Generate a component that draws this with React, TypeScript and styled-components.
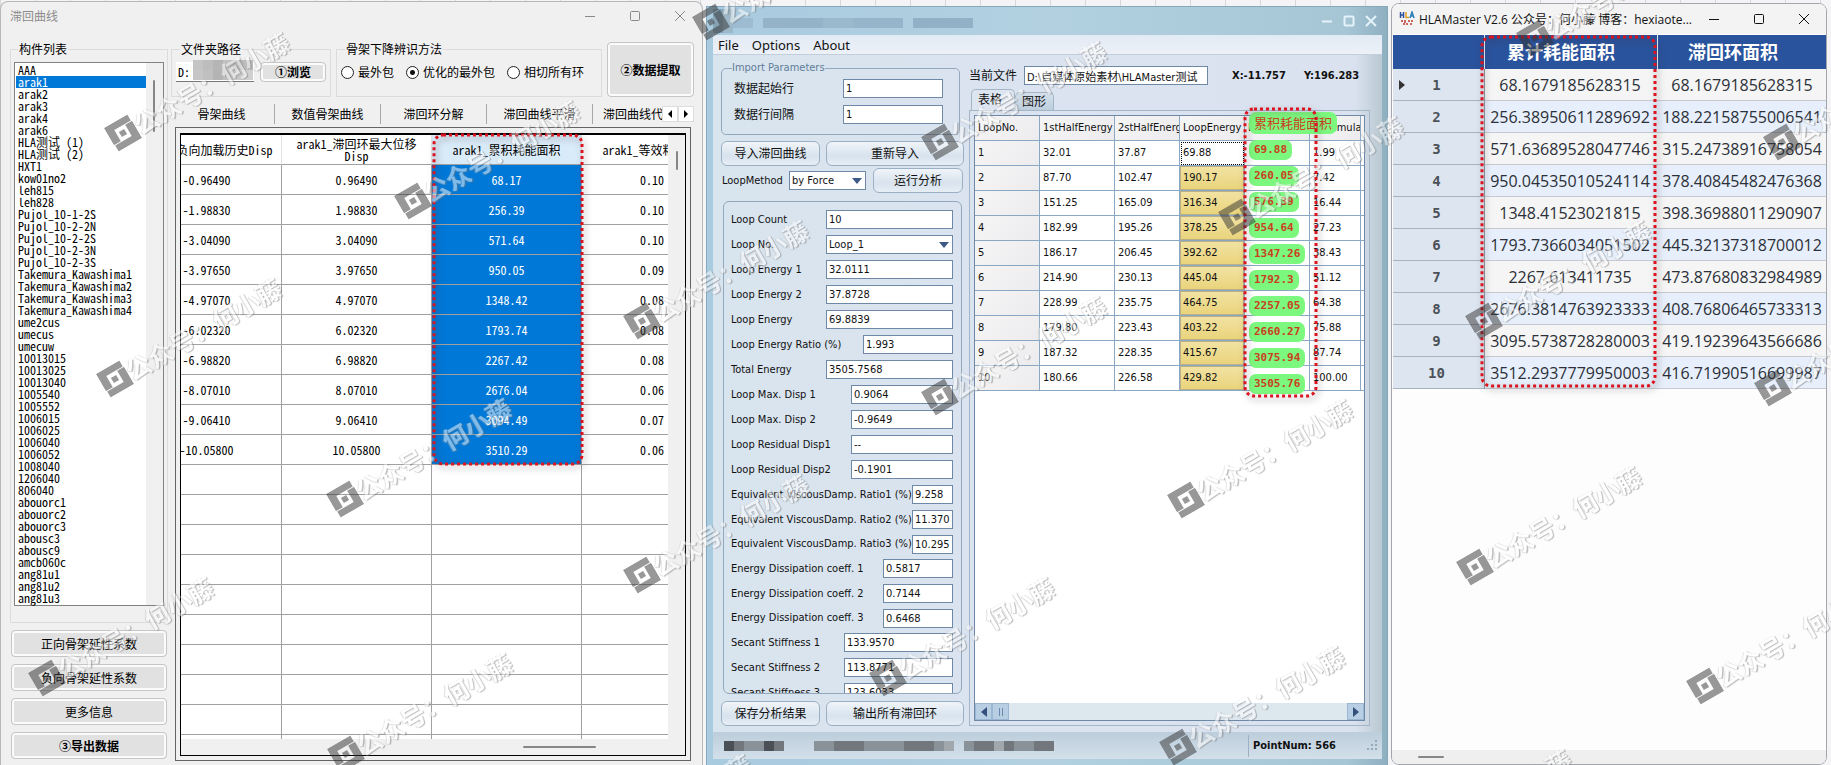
import React from 'react';
import styled, { createGlobalStyle, css } from 'styled-components';

const song = `"Noto Sans CJK SC", sans-serif`;
const tahoma = `"DejaVu Sans Condensed", "Noto Sans CJK SC", sans-serif`;
const segoe = `"Open Sans", "Noto Sans CJK SC", sans-serif`;

const GlobalStyle = createGlobalStyle`
  *, *::before, *::after { box-sizing: border-box; }
  body { margin: 0; background: #e4e4e8; }
  button, input, select { font: inherit; color: inherit; margin: 0; }
`;

const Desktop = styled.main`
  position: relative;
  display: grid;
  grid-template-columns: minmax(0, 703fr) minmax(0, 682fr) minmax(0, 436fr);
  grid-template-rows: minmax(0, 1fr);
  column-gap: 3px;
  padding-right: 4px;
  height: 100vh;
  min-height: 765px;
  overflow: hidden;
  background: repeating-linear-gradient(90deg, #d8d8dc 0 1px, #f4f4f6 1px 35px);
`;

const CaptionIcons = styled.div`
  display: flex;
  margin-left: auto;
`;
const CaptionButton = styled.button<{ $w: number; $color: string }>`
  display: grid;
  place-items: center;
  width: ${p => p.$w}px;
  height: 28px;
  padding: 0;
  border: 0;
  background: none;
  color: ${p => p.$color};
`;

function Caption({ w, color, heavy }: { w: number; color: string; heavy?: boolean }) {
  const sw = heavy ? 2 : 1;
  return (
    <CaptionIcons>
      <CaptionButton $w={w} $color={color} aria-label="Minimize">
        <svg width="12" height="12" fill="none" stroke="currentColor" strokeWidth={sw}><path d="M1 6.5h10" /></svg>
      </CaptionButton>
      <CaptionButton $w={w} $color={color} aria-label="Maximize">
        <svg width="12" height="12" fill="none" stroke="currentColor" strokeWidth={sw}><rect x="1.5" y="1.5" width="9" height="9" rx="1" /></svg>
      </CaptionButton>
      <CaptionButton $w={w} $color={color} aria-label="Close">
        <svg width="12" height="12" fill="none" stroke="currentColor" strokeWidth={sw}><path d="M1 1l10 10M11 1L1 11" /></svg>
      </CaptionButton>
    </CaptionIcons>
  );
}

/* Dotted red marker laid over a table column */
const Marker = styled.div<{ $x: number; $y: number; $w: number; $h: number }>`
  position: absolute;
  left: ${p => p.$x}px;
  top: ${p => p.$y}px;
  width: ${p => p.$w}px;
  height: ${p => p.$h}px;
  pointer-events: none;
  filter: drop-shadow(2px 3px 3px rgba(60, 40, 40, 0.5));
  svg { display: block; width: 100%; height: 100%; overflow: visible; }
`;
function DottedMarker(p: { x: number; y: number; w: number; h: number }) {
  return (
    <Marker $x={p.x} $y={p.y} $w={p.w} $h={p.h}>
      <svg>
        <rect width={p.w} height={p.h} rx="9" fill="none" stroke="#dc1420" strokeWidth="3" strokeDasharray="3 3" />
      </svg>
    </Marker>
  );
}

/* ---------- hysteresis window ---------- */

const HystWindow = styled.section`
  display: flex;
  flex-direction: column;
  margin-top: 1px;
  border: 1px solid #b8b8b8;
  border-bottom: 0;
  border-radius: 8px 8px 0 0;
  background: #f0f0f0;
  font: 12px/12px ${song};
  font-feature-settings: "hwid";
  color: #000;
  overflow: hidden;
`;
const HystTitle = styled.header`
  display: flex;
  align-items: center;
  height: 28px;
  padding: 0 0 0 9px;
  color: #8c8c8c;
`;
const HystBody = styled.div`
  flex: 1;
  min-height: 0;
  display: grid;
  grid-template-columns: 158px minmax(0, 1fr);
  grid-template-rows: minmax(0, 1fr);
  column-gap: 3px;
  padding: 12px 8px 4px 9px;
`;
const Side = styled.div`
  display: flex;
  flex-direction: column;
  gap: 7px;
  > button { margin: 0 1px; }
`;
const Group = styled.fieldset<{ $grow?: boolean }>`
  min-width: 0;
  margin: 0;
  padding: 6px 4px 8px;
  border: 1px solid #dcdcdc;
  legend { margin-left: 4px; padding: 0 1px; line-height: 14px; }
  ${p => p.$grow && css`height: 581px; padding: 6px 3px 15px;`}
`;
const ListBox = styled.ul`
  position: relative;
  display: grid;
  grid-template-columns: minmax(0, 1fr) 16px;
  grid-auto-rows: 12px;
  margin: 0;
  padding: 1px;
  list-style: none;
  border: 1px solid #828282;
  background: linear-gradient(#f0f0f0, #f0f0f0) right / 17px 100% no-repeat #fff;
  li { grid-column: 1; padding-left: 2px; white-space: pre; }
  li[aria-selected='true'] { background: #0078d7; color: #fff; }
`;
const Thumb = styled.span<{ $w: number; $h: number }>`
  display: block;
  width: ${p => p.$w}px;
  height: ${p => p.$h}px;
  background: #868686;
  border-radius: 1px;
`;
const ListThumb = styled(Thumb)`
  position: absolute;
  right: 8px;
  top: 17px;
`;
const ClassicButton = styled.button<{ $h: number; $w?: number; $bold?: boolean }>`
  height: ${p => p.$h}px;
  width: ${p => (p.$w ? `${p.$w}px` : 'auto')};
  padding: 0;
  border: 1px solid #c6c6c6;
  border-radius: 4px;
  box-shadow: inset 0 0 0 2px #fbfbfb;
  background: #e1e1e1;
  font-weight: ${p => (p.$bold ? 700 : 400)};
  white-space: nowrap;
`;
const HystMain = styled.div`
  display: flex;
  flex-direction: column;
  min-width: 0;
  min-height: 0;
`;
const Options = styled.div`
  display: grid;
  grid-template-columns: 160px minmax(0, 1fr) 87px;
  column-gap: 5px;
  align-items: start;
`;
const OptionGroup = styled(Group)`
  height: 55px;
`;
const PathRow = styled.div`
  display: flex;
  align-items: center;
  gap: 6px;
`;
const PathField = styled.div`
  position: relative;
  width: 78px;
  height: 20px;
  input {
    width: 100%;
    height: 20px;
    padding: 0 2px;
    border: 0;
    border-bottom: 1px solid #777;
    background: #fff;
  }
`;
const PathMosaic = styled.svg`
  display: block;
  position: absolute;
  right: 1px;
  top: -2px;
`;
const RadioRow = styled.div`
  display: flex;
  align-items: center;
  gap: 12px;
  height: 20px;
  label { display: flex; align-items: center; gap: 4px; white-space: nowrap; }
  input {
    appearance: none;
    width: 13px;
    height: 13px;
    border: 1px solid #222;
    border-radius: 50%;
    background: #fff;
  }
  input:checked { background: radial-gradient(circle, #111 0 2px, #fff 3px); }
`;
const TabStrip = styled.div`
  display: flex;
  align-items: center;
  height: 24px;
  margin: 5px 0 1px -2px;
`;
const StripTab = styled.button`
  flex: none;
  width: 106px;
  height: 20px;
  padding: 0;
  border: 0;
  border-right: 1px solid #a8a8a8;
  background: none;
  white-space: nowrap;
`;
const LastTab = styled(StripTab)`
  flex: 1;
  min-width: 0;
  padding-left: 10px;
  border: 0;
  overflow: hidden;
  text-align: left;
`;
const TabArrow = styled.button`
  display: grid;
  place-items: center;
  width: 16px;
  height: 16px;
  padding: 0;
  border: 1px solid #ddd;
  background: #fff;
`;
const Frame = styled.div`
  flex: 1;
  min-height: 0;
  display: flex;
  margin: 0 3px 0 4px;
  padding: 5px 4px 4px;
  border: 1px solid #646464;
`;
const Inner = styled.div`
  position: relative;
  flex: 1;
  min-width: 0;
  display: grid;
  grid-template-columns: minmax(0, 1fr) 17px;
  grid-template-rows: minmax(0, 1fr) 16px;
  border: 1px solid #000;
  border-top-width: 2px;
`;
const Viewport = styled.div`
  overflow: hidden;
  background: #fff;
`;
const LoadTable = styled.table`
  width: 600px;
  margin-left: -49px;
  table-layout: fixed;
  border-collapse: separate;
  border-spacing: 0;
  th, td {
    height: 30px;
    padding: 0;
    border-right: 1px solid #a0a0a0;
    border-bottom: 1px solid #a0a0a0;
    font-weight: 400;
    text-align: center;
  }
  th { border-right-color: #e2e2e2; overflow: hidden; }
  td:nth-child(4) { padding-left: 58px; text-align: left; }
`;
const Picked = styled.td`
  background: #0078d7;
  color: #fff;
`;
const PickedHead = styled.th`
  background: #d9ebf9;
`;
const RightTrack = styled.div`
  padding: 16px 0 0 8px;
  background: #f0f0f0;
`;
const BottomTrack = styled.div`
  grid-column: 1 / -1;
  display: flex;
  align-items: center;
  justify-content: flex-end;
  padding-right: 89px;
  background: #f0f0f0;
`;

const members = ['AAA', 'arak1', 'arak2', 'arak3', 'arak4', 'arak6', 'HLA测试 (1)', 'HLA测试 (2)', 'HXT1', 'kow01no2', 'leh815', 'leh828',
  'Pujol_10-1-2S', 'Pujol_10-2-2N', 'Pujol_10-2-2S', 'Pujol_10-2-3N', 'Pujol_10-2-3S',
  'Takemura_Kawashima1', 'Takemura_Kawashima2', 'Takemura_Kawashima3', 'Takemura_Kawashima4',
  'ume2cus', 'umecus', 'umecuw', '10013015', '10013025', '10013040', '1005540', '1005552', '1006015', '1006025', '1006040', '1006052',
  '1008040', '1206040', '806040', 'abouorc1', 'abouorc2', 'abouorc3', 'abousc3', 'abousc9', 'amcb060c', 'ang81u1', 'ang81u2', 'ang81u3'];

const loads: [string, string, string][] = [
  ['0.96490', '68.17', '0.10'], ['1.98830', '256.39', '0.10'], ['3.04090', '571.64', '0.10'], ['3.97650', '950.05', '0.09'],
  ['4.97070', '1348.42', '0.08'], ['6.02320', '1793.74', '0.08'], ['6.98820', '2267.42', '0.08'], ['8.07010', '2676.04', '0.06'],
  ['9.06410', '3094.49', '0.07'], ['10.05800', '3510.29', '0.06'],
];

function Pixels({ cells, size, cols = cells.length }: { cells: string[]; size: number; cols?: number }) {
  return (
    <svg width={cols * size} height={Math.ceil(cells.length / cols) * size} aria-hidden="true" shapeRendering="crispEdges">
      {cells.map((c, i) => <rect key={i} x={(i % cols) * size} y={Math.floor(i / cols) * size} width={size} height={size} fill={c} />)}
    </svg>
  );
}

const pathCells = ['#c4c4c4', '#bdbdbd', '#b5b5b5', '#c0c0c0', '#b4b4b4', '#bcbcbc', '#c6c6c6', '#c0c0c0', '#b4b4b4', '#bebebe', '#c8c8c8', '#d0d0d0'];

function Hysteresis() {
  return (
    <HystWindow>
      <HystTitle>滞回曲线<Caption w={45} color="#8a8a8a" /></HystTitle>
      <HystBody>
        <Side>
          <Group $grow>
            <legend>构件列表</legend>
            <ListBox role="listbox" aria-label="构件列表">
              {members.map(m => <li key={m} role="option" aria-selected={m === 'arak1'}>{m}</li>)}
              <ListThumb $w={2} $h={52} />
            </ListBox>
          </Group>
          <ClassicButton $h={27}>正向骨架延性系数</ClassicButton>
          <ClassicButton $h={27}>负向骨架延性系数</ClassicButton>
          <ClassicButton $h={27}>更多信息</ClassicButton>
          <ClassicButton $h={27} $bold>③导出数据</ClassicButton>
        </Side>
        <HystMain>
          <Options>
            <OptionGroup>
              <legend>文件夹路径</legend>
              <PathRow>
                <PathField>
                  <input aria-label="文件夹路径" defaultValue="D:" />
                  <PathMosaic as="span"><Pixels cells={pathCells} size={10} cols={6} /></PathMosaic>
                </PathField>
                <ClassicButton $h={20} $w={66} $bold>①浏览</ClassicButton>
              </PathRow>
            </OptionGroup>
            <OptionGroup>
              <legend>骨架下降辨识方法</legend>
              <RadioRow>
                <label><input type="radio" name="method" />最外包</label>
                <label><input type="radio" name="method" defaultChecked />优化的最外包</label>
                <label><input type="radio" name="method" />相切所有环</label>
              </RadioRow>
            </OptionGroup>
            <ClassicButton $h={55} $bold>②数据提取</ClassicButton>
          </Options>
          <TabStrip>
            <StripTab>骨架曲线</StripTab>
            <StripTab>数值骨架曲线</StripTab>
            <StripTab>滞回环分解</StripTab>
            <StripTab>滞回曲线平滑</StripTab>
            <LastTab>滞回曲线代</LastTab>
            <TabArrow aria-label="Previous tabs"><svg width="8" height="8"><path d="M6 0v8L2 4z" /></svg></TabArrow>
            <TabArrow aria-label="Next tabs"><svg width="8" height="8"><path d="M2 0v8l4-4z" /></svg></TabArrow>
          </TabStrip>
          <Frame>
            <Inner>
              <Viewport>
                <LoadTable>
                  <thead>
                    <tr><th>arak1_负向加载历史Disp</th><th>arak1_滞回环最大位移<br />Disp</th><PickedHead>arak1_累积耗能面积</PickedHead><th>arak1_等效粘滞阻尼</th></tr>
                  </thead>
                  <tbody>
                    {loads.map(r => <tr key={r[0]}><td>-{r[0]}</td><td>{r[0]}</td><Picked>{r[1]}</Picked><td>{r[2]}</td></tr>)}
                    {Array.from({ length: 10 }, (_, i) => <tr key={i}><td /><td /><td /><td /></tr>)}
                  </tbody>
                </LoadTable>
              </Viewport>
              <RightTrack><Thumb $w={2} $h={19} /></RightTrack>
              <BottomTrack><Thumb $w={73} $h={2} /></BottomTrack>
              <DottedMarker x={253} y={0} w={148} h={329} />
            </Inner>
          </Frame>
        </HystMain>
      </HystBody>
    </HystWindow>
  );
}

/* ---------- loop analysis window ---------- */

const LoopWindow = styled.section`
  display: flex;
  flex-direction: column;
  margin-top: 6px;
  padding: 0 5px 6px 6px;
  border: 1px solid #86a8bc;
  border-bottom: 0;
  background: linear-gradient(90deg, #a9cbe0 0, #b2d0e0 50%, #a6c6d6 94%, #8fb0c0 100%);
  font: 11px/14px ${tahoma};
  color: #111;
`;
const LoopTitle = styled.header`
  display: flex;
  align-items: center;
  height: 28px;
`;
const LoopMenu = styled.nav`
  display: flex;
  align-items: center;
  gap: 13px;
  height: 20px;
  padding-left: 5px;
  border-bottom: 1px solid #c3cedc;
  background: linear-gradient(#e2eaf4, #edf1f8);
  font: 13px/18px "Noto Sans", sans-serif;
  button { padding: 0; border: 0; background: none; }
`;
const LoopBody = styled.div`
  flex: 1;
  min-height: 0;
  display: grid;
  grid-template-columns: 243px minmax(0, 1fr);
  column-gap: 5px;
  padding: 6px 12px 6px 8px;
  background: linear-gradient(90deg, #d8e4ee, #dbe3f0 60%, #d9e2ee 96%, #b9c8d2);
`;
const Controls = styled.div`
  display: flex;
  flex-direction: column;
  min-height: 0;
`;
const ImportGroup = styled.fieldset`
  display: grid;
  row-gap: 7px;
  width: 239px;
  height: 74px;
  margin: 0 0 6px;
  padding: 4px 16px 8px 12px;
  border: 1px solid #93a8bd;
  border-radius: 5px;
  legend { padding: 0; margin-left: -2px; color: #5f7d98; line-height: 14px; }
`;
const ImportRow = styled.label`
  display: grid;
  grid-template-columns: minmax(0, 1fr) 100px;
  align-items: center;
  font-size: 12px;
`;
const field = css`
  flex: none;
  height: 19px;
  padding: 0 2px;
  border: 1px solid #6e89a6;
  background: #fff;
  font-size: 11px;
`;
const Field = styled.input<{ $w?: number }>`
  ${field}
  width: ${p => (p.$w ? `${p.$w}px` : '100%')};
`;
const Select = styled.select<{ $w: number }>`
  ${field}
  width: ${p => p.$w}px;
  appearance: none;
  background: #fff url("data:image/svg+xml,%3Csvg xmlns='http://www.w3.org/2000/svg' width='10' height='6'%3E%3Cpath d='M0 0h10L5 6z' fill='%233c5a86'/%3E%3C/svg%3E") right 3px center no-repeat;
`;
const SoftButton = styled.button<{ $w: number }>`
  width: ${p => p.$w}px;
  height: 25px;
  padding: 0;
  border: 1px solid #9cb0c4;
  border-radius: 6px;
  background: linear-gradient(#f0f4f9, #d8e3ee 60%, #e6edf5);
  font-size: 12px;
`;
const ButtonRow = styled.div`
  display: flex;
  align-items: center;
  gap: 6px;
`;
const MethodRow = styled.div`
  display: flex;
  align-items: center;
  height: 25px;
  margin: 2px 0 8px 1px;
  label { width: 67px; }
  select { margin-right: 7px; }
`;
const Results = styled.div`
  height: 493px;
  width: 239px;
  margin: 0 0 7px 2px;
  padding: 5px 8px 0 7px;
  border: 1px solid #93a8bd;
  border-radius: 6px;
  overflow: hidden;
`;
const ResultRow = styled.label<{ $h: number }>`
  display: flex;
  align-items: center;
  justify-content: space-between;
  height: ${p => p.$h}px;
  white-space: nowrap;
`;
const DataSide = styled.div`
  display: flex;
  flex-direction: column;
  min-width: 0;
`;
const FileRow = styled.div`
  display: flex;
  align-items: center;
  height: 19px;
  margin-top: 5px;
  label { width: 55px; font-size: 12px; }
  b { margin-left: 24px; }
  b + b { margin-left: 18px; }
`;
const Tabs = styled.div`
  display: flex;
  align-items: flex-end;
  height: 25px;
  padding-left: 2px;
`;
const Tab = styled.button<{ $on?: boolean }>`
  width: ${p => (p.$on ? 44 : 39)}px;
  height: ${p => (p.$on ? 21 : 18)}px;
  padding: 0 6px;
  border: 1px solid #a4b5c6;
  border-bottom: 0;
  border-radius: 5px 5px 0 0;
  background: ${p => (p.$on ? '#dde5f0' : 'linear-gradient(#d5e1ec, #bccedd)')};
  font-size: 12px;
  text-align: left;
`;
const Sheet = styled.div`
  flex: 1;
  min-height: 0;
  display: flex;
  padding: 4px;
  border: 1px solid #a4b5c6;
`;
const Grid = styled.div`
  position: relative;
  flex: 1;
  min-width: 0;
  display: flex;
  flex-direction: column;
  border: 1px solid #6e89a6;
  background: #fff;
`;
const GridClip = styled.div`
  flex: 1;
  overflow: hidden;
`;
const LoopTable = styled.table`
  width: 455px;
  table-layout: fixed;
  border-collapse: separate;
  border-spacing: 0;
  th, td {
    height: 25px;
    padding: 0 0 0 3px;
    border-right: 1px solid #8aa8c4;
    border-bottom: 1px solid #8aa8c4;
    background: #fff;
    font-weight: 400;
    text-align: left;
    white-space: nowrap;
    overflow: hidden;
  }
  thead th, td:first-child { background: linear-gradient(135deg, #f5f5f6, #ececee); }
`;
const GoldCell = styled.td<{ $focus: boolean }>`
  && {
    ${p => (p.$focus
      ? css`outline: 1px dotted #000; outline-offset: -2px;`
      : css`background: linear-gradient(#f2e3a4, #e9d37a); box-shadow: inset 0 0 0 1px #b9b087;`)}
  }
`;
const ScrollBar = styled.div`
  display: flex;
  height: 17px;
  background: #dce7ee;
`;
const ScrollPart = styled.button<{ $end?: boolean }>`
  display: grid;
  place-items: center;
  width: 17px;
  padding: 0;
  margin-left: ${p => (p.$end ? 'auto' : '0')};
  border: 1px solid #9cb7d4;
  background: #b7cee3;
`;
const Tags = styled.div`
  position: absolute;
  left: 274px;
  top: -4px;
  display: flex;
  flex-direction: column;
  align-items: flex-start;
  gap: 6px;
  color: #c8401e;
  font: 700 11px/20px "DejaVu Sans Mono", monospace;
`;
const Tag = styled.span<{ $head?: boolean }>`
  padding: 0 5px;
  border-radius: 7px;
  background: #7df87f;
  ${p => p.$head && css`font: 400 13px/22px "Noto Sans CJK SC", sans-serif;`}
`;
const StatusBar = styled.footer`
  display: grid;
  grid-template-columns: minmax(0, 1fr) 134px;
  align-items: center;
  height: 27px;
  padding-left: 11px;
  background: linear-gradient(#bccddb, #d3e0ea);
`;
const StatusMosaics = styled.div`
  display: flex;
  gap: 10px;
  svg:first-child { margin-right: 20px; }
`;
const PointCount = styled.b`
  display: flex;
  align-items: center;
  justify-content: space-between;
  height: 22px;
  padding: 0 4px;
  border-left: 1px solid #9db3c4;
`;

const results: [string, string, number, number][] = [
  ['Loop Count', '10', 127, 25], ['Loop No.', 'Loop_1', 127, 25], ['Loop Energy 1', '32.0111', 127, 25], ['Loop Energy 2', '37.8728', 127, 25],
  ['Loop Energy', '69.8839', 127, 25], ['Loop Energy Ratio (%)', '1.993', 90, 25], ['Total Energy', '3505.7568', 127, 25],
  ['Loop Max. Disp 1', '0.9064', 102, 25], ['Loop Max. Disp 2', '-0.9649', 102, 25], ['Loop Residual Disp1', '--', 102, 25], ['Loop Residual Disp2', '-0.1901', 102, 25],
  ['Equivalent ViscousDamp. Ratio1 (%)', '9.258', 41, 25], ['Equivalent ViscousDamp. Ratio2 (%)', '11.370', 41, 25], ['Equivalent ViscousDamp. Ratio3 (%)', '10.295', 41, 24],
  ['Energy Dissipation coeff. 1', '0.5817', 70, 25], ['Energy Dissipation coeff. 2', '0.7144', 70, 25], ['Energy Dissipation coeff. 3', '0.6468', 70, 24],
  ['Secant Stiffness 1', '133.9570', 109, 25], ['Secant Stiffness 2', '113.8771', 109, 25], ['Secant Stiffness 3', '123.6033', 109, 25],
];
const loops = [
  ['32.01', '37.87', '69.88', '1.99'], ['87.70', '102.47', '190.17', '7.42'], ['151.25', '165.09', '316.34', '16.44'],
  ['182.99', '195.26', '378.25', '27.23'], ['186.17', '206.45', '392.62', '38.43'], ['214.90', '230.13', '445.04', '51.12'],
  ['228.99', '235.75', '464.75', '64.38'], ['179.80', '223.43', '403.22', '75.88'], ['187.32', '228.35', '415.67', '87.74'],
  ['180.66', '226.58', '429.82', '100.00'],
];
const sums = ['69.88', '260.05', '576.39', '954.64', '1347.26', '1792.3', '2257.05', '2660.27', '3075.94', '3505.76'];

const greys = (s: string) => s.split('').map(c => ({ a: '#4b5057', b: '#72777d', c: '#8a9299', d: '#a0a8ae' }[c] as string));

function LoopAnalysis() {
  return (
    <LoopWindow>
      <LoopTitle>
        <svg width="260" height="24" aria-hidden="true" shapeRendering="crispEdges">
          <rect width="10" height="24" fill="#86a3b5" /><rect x="10" width="10" height="24" fill="#9cb8c8" />
          <rect x="20" y="9" width="20" height="10" fill="#9dbbd1" /><rect x="50" y="9" width="60" height="10" fill="#94b3c9" />
          <rect x="110" y="9" width="30" height="10" fill="#9ab9cd" /><rect x="140" y="9" width="50" height="10" fill="#96b5ca" />
          <rect x="200" y="9" width="60" height="10" fill="#92b1c7" />
        </svg>
        <Caption w={22} color="#e4f2fa" heavy />
      </LoopTitle>
      <LoopMenu><button>File</button><button>Options</button><button>About</button></LoopMenu>
      <LoopBody>
        <Controls>
          <ImportGroup>
            <legend>Import Parameters</legend>
            <ImportRow>数据起始行<Field defaultValue="1" /></ImportRow>
            <ImportRow>数据行间隔<Field defaultValue="1" /></ImportRow>
          </ImportGroup>
          <ButtonRow><SoftButton $w={99}>导入滞回曲线</SoftButton><SoftButton $w={138}>重新导入</SoftButton></ButtonRow>
          <MethodRow>
            <label htmlFor="method">LoopMethod</label>
            <Select id="method" $w={77}><option>by Force</option></Select>
            <SoftButton $w={90}>运行分析</SoftButton>
          </MethodRow>
          <Results>
            {results.map(([name, value, w, h]) => (
              <ResultRow key={name} $h={h}>
                {name}
                {name === 'Loop No.' ? <Select $w={w}><option>{value}</option></Select> : <Field $w={w} readOnly value={value} />}
              </ResultRow>
            ))}
          </Results>
          <ButtonRow><SoftButton $w={99}>保存分析结果</SoftButton><SoftButton $w={138}>输出所有滞回环</SoftButton></ButtonRow>
        </Controls>
        <DataSide>
          <FileRow>
            <label htmlFor="file">当前文件</label>
            <Field id="file" $w={184} readOnly value="D:\自媒体原始素材\HLAMaster测试" />
            <b>X:-11.757</b><b>Y:196.283</b>
          </FileRow>
          <Tabs><Tab $on>表格</Tab><Tab>图形</Tab></Tabs>
          <Sheet>
            <Grid>
              <GridClip>
                <LoopTable>
                  <colgroup><col width="65" /><col width="75" /><col width="65" /><col width="65" /><col width="65" /><col width="51" /><col width="69" /></colgroup>
                  <thead><tr><th>LoopNo.</th><th>1stHalfEnergy</th><th>2stHalfEnergy</th><th>LoopEnergy</th><th>D</th><th>Accumula</th><th /></tr></thead>
                  <tbody>
                    {loops.map((r, i) => (
                      <tr key={i}><td>{i + 1}</td><td>{r[0]}</td><td>{r[1]}</td><GoldCell $focus={i === 0}>{r[2]}</GoldCell><td /><td>{r[3]}</td><td /></tr>
                    ))}
                  </tbody>
                </LoopTable>
              </GridClip>
              <ScrollBar>
                <ScrollPart aria-label="Scroll left"><svg width="6" height="10"><path d="M6 0v10L0 5z" fill="#34507c" /></svg></ScrollPart>
                <ScrollPart aria-label="Scroll thumb"><svg width="6" height="8" stroke="#6c8ab0"><path d="M1.5 0v8M4.5 0v8" /></svg></ScrollPart>
                <ScrollPart $end aria-label="Scroll right"><svg width="6" height="10"><path d="M0 0v10l6-5z" fill="#34507c" /></svg></ScrollPart>
              </ScrollBar>
              <Tags><Tag $head>累积耗能面积</Tag>{sums.map(s => <Tag key={s}>{s}</Tag>)}</Tags>
              <DottedMarker x={270} y={-7} w={71} h={287} />
            </Grid>
          </Sheet>
        </DataSide>
      </LoopBody>
      <StatusBar>
        <StatusMosaics>
          <Pixels size={10} cells={greys('abccab')} />
          <Pixels size={10} cells={greys('ccbbbccccbbbcd')} />
          <Pixels size={10} cells={greys('cbbdbccbb')} />
        </StatusMosaics>
        <PointCount>
          PointNum: 566
          <svg width="12" height="12" fill="#97a9b8"><path d="M9 0h2v2H9zM5 4h2v2H5zM9 4h2v2H9zM1 8h2v2H1zM5 8h2v2H5zM9 8h2v2H9z" /></svg>
        </PointCount>
      </StatusBar>
    </LoopWindow>
  );
}

/* ---------- HLAMaster window ---------- */

const MasterWindow = styled.section`
  display: flex;
  flex-direction: column;
  margin-top: 3px;
  border: 1px solid #a3a7ad;
  border-radius: 8px;
  background: #fdfdfe;
  overflow: hidden;
  font-family: ${segoe};
  color: #2c3038;
`;
const MasterTitle = styled.header`
  display: flex;
  align-items: center;
  height: 30px;
  padding: 0 2px 0 7px;
  background: #f3f3f3;
  color: #111;
  font-size: 12px;
  white-space: nowrap;
  svg { flex: none; }
  h1 { margin: 0 0 0 4px; font: inherit; }
`;
const MasterArea = styled.div`
  position: relative;
  flex: 1;
  padding: 1px 0 0 1px;
`;
const EnergyTable = styled.table`
  width: 100%;
  table-layout: fixed;
  border-collapse: separate;
  border-spacing: 0;
  text-align: center;
  thead th {
    height: 34px;
    padding: 0 20px 0 0;
    border-right: 1px solid #e8edf5;
    background: #2a539d;
    color: #fff;
    font-size: 18px;
    font-weight: 700;
    line-height: 20px;
  }
  thead th:last-child { border-right: 0; padding-right: 18px; }
  tbody th {
    position: relative;
    height: 32px;
    padding: 0 4px 0 0;
    border-right: 1px solid #8f979f;
    border-bottom: 1px solid #a9b2bf;
    background: #dde5f0;
    font: 700 14px/20px "DejaVu Sans Mono", monospace;
    color: #4c5158;
  }
  td {
    padding: 0 3px 0 0;
    border-bottom: 1px solid #c6cad0;
    background: #f5f5f6;
    font-size: 16px;
    line-height: 20px;
  }
  td:last-child { padding: 0; }
  tbody tr:nth-child(even) td { background: #e6effb; }
`;
const Pointer = styled.svg`
  position: absolute;
  left: 6px;
  top: 11px;
`;
const MasterTrack = styled.div`
  display: flex;
  align-items: center;
  height: 14px;
  padding-left: 26px;
  background: #efeff0;
`;
const energy = [
  ['68.1679185628315', '68.1679185628315'], ['256.38950611289692', '188.22158755006541'], ['571.63689528047746', '315.24738916758054'],
  ['950.04535010524114', '378.40845482476368'], ['1348.41523021815', '398.36988011290907'], ['1793.7366034051502', '445.32137318700012'],
  ['2267.613411735', '473.87680832984989'], ['2676.3814763923333', '408.76806465733313'], ['3095.5738728280003', '419.19239643566686'],
  ['3512.2937779950003', '416.71990516699987'],
];

function Master() {
  return (
    <MasterWindow>
      <MasterTitle>
        <svg width="16" height="16" viewBox="0 0 16 16" fill="none" strokeWidth="1.5">
          <path d="M1.5 1v6M4.5 1v6M1.5 4h3" stroke="#2c4f9c" />
          <path d="M7 1v5.500h3" stroke="#e0a020" />
          <path d="M11 7l2-6 2 6M12 5h2.500" stroke="#2c7fb8" />
          <path d="M2 10h2M6 9v3M9 10h2M13 9v2M4 13h2M8 12v2M11 13h2" stroke="#c23a30" />
        </svg>
        <h1>HLAMaster V2.6 公众号：何小藤 博客：hexiaote...</h1>
        <Caption w={45} color="#111" />
      </MasterTitle>
      <MasterArea>
        <EnergyTable>
          <colgroup><col width="92" /><col width="173" /><col /></colgroup>
          <thead><tr><th /><th>累计耗能面积</th><th>滞回环面积</th></tr></thead>
          <tbody>
            {energy.map((r, i) => (
              <tr key={i}>
                <th scope="row">{i === 0 && <Pointer width="6" height="10"><path d="M0 0v10l6-5z" fill="#333" /></Pointer>}{i + 1}</th>
                <td>{r[0]}</td><td>{r[1]}</td>
              </tr>
            ))}
          </tbody>
        </EnergyTable>
        <DottedMarker x={90} y={3} w={173} h={349} />
      </MasterArea>
      <MasterTrack><Thumb $w={26} $h={2} /></MasterTrack>
    </MasterWindow>
  );
}

/* ---------- watermark ---------- */

const Stamp = styled.div`
  position: absolute;
  display: flex;
  align-items: center;
  width: 220px;
  height: 30px;
  transform: rotate(-30deg);
  transform-origin: 14px 15px;
  pointer-events: none;
  opacity: 0.5;
  svg { flex: none; }
  span {
    color: #fff;
    font: 700 25px/30px "Noto Sans CJK SC", sans-serif;
    text-shadow: 1px 1px 1px #777, -1px 0 1px #bbb;
    white-space: nowrap;
  }
`;
const stamps = [[123, 133], [115, 379], [47, 678], [345, 499], [346, 754], [413, 201], [642, 321], [642, 575], [711, 22], [940, 142],
  [940, 397], [888, 678], [1237, 217], [1186, 500], [1178, 747], [1535, 38], [1782, 142], [1484, 321], [1773, 388], [1475, 567], [1705, 686],
  [585, 855], [1405, 850]];

export default function App() {
  return (
    <>
      <GlobalStyle />
      <Desktop>
        <Hysteresis />
        <LoopAnalysis />
        <Master />
        {stamps.map(([x, y]) => (
          <Stamp key={`${x}-${y}`} style={{ left: x - 14, top: y - 15 }}>
            <svg width="28" height="28" viewBox="0 0 28 28" fill="#333">
              <path d="M0 0h27v7H8v13H0z" />
              <path d="M28 28H1v-7h19V8h8z" />
              <path d="M11 11h6v6h-6z" />
            </svg>
            <span>公众号：何小藤</span>
          </Stamp>
        ))}
      </Desktop>
    </>
  );
}
